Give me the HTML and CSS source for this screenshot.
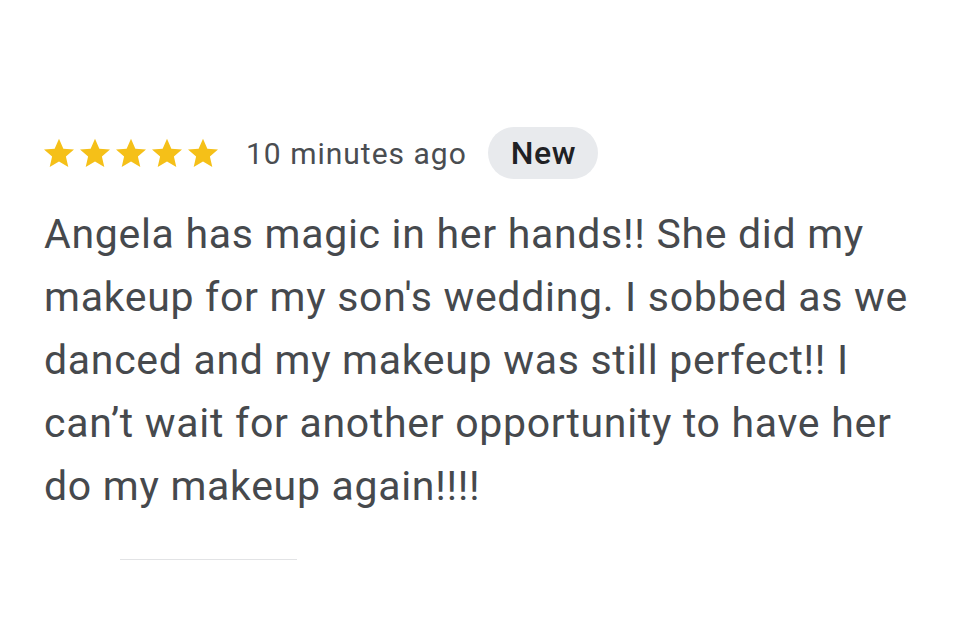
FILE: index.html
```html
<!DOCTYPE html>
<html lang="en">
<head>
<meta charset="utf-8">
<title>Review</title>
<link rel="stylesheet" href="styles.css">
</head>
<body>
<main class="review">
  <div class="review-head">
    <div class="stars" aria-label="5 stars">
      <svg class="star" viewBox="0 0 24 24"><path d="M12 2.5l2.9 6.6 7.1.6-5.4 4.7 1.6 7-6.2-3.7-6.2 3.7 1.6-7L2 9.7l7.1-.6z"/></svg>
      <svg class="star" viewBox="0 0 24 24"><path d="M12 2.5l2.9 6.6 7.1.6-5.4 4.7 1.6 7-6.2-3.7-6.2 3.7 1.6-7L2 9.7l7.1-.6z"/></svg>
      <svg class="star" viewBox="0 0 24 24"><path d="M12 2.5l2.9 6.6 7.1.6-5.4 4.7 1.6 7-6.2-3.7-6.2 3.7 1.6-7L2 9.7l7.1-.6z"/></svg>
      <svg class="star" viewBox="0 0 24 24"><path d="M12 2.5l2.9 6.6 7.1.6-5.4 4.7 1.6 7-6.2-3.7-6.2 3.7 1.6-7L2 9.7l7.1-.6z"/></svg>
      <svg class="star" viewBox="0 0 24 24"><path d="M12 2.5l2.9 6.6 7.1.6-5.4 4.7 1.6 7-6.2-3.7-6.2 3.7 1.6-7L2 9.7l7.1-.6z"/></svg>
    </div>
    <span class="time">10 minutes ago</span>
    <span class="badge">New</span>
  </div>
  <p class="review-text">Angela has magic in her hands!! She did my makeup for my son's wedding. I sobbed as we danced and my makeup was still perfect!! I can’t wait for another opportunity to have her do my makeup again!!!!</p>
  <div class="divider"></div>
</main>
</body>
</html>
```
FILE: styles.css
```css
html, body {
  margin: 0;
  padding: 0;
  background: #ffffff;
}
body {
  font-family: Roboto, "Noto Sans", sans-serif;
  width: 960px;
  height: 640px;
  overflow: hidden;
}
.review {
  padding: 127px 0 0 41px;
  display: flex;
  flex-direction: column;
}
.review-head {
  display: flex;
  align-items: center;
  height: 52px;
}
.stars {
  display: flex;
}
.star {
  width: 36px;
  height: 36px;
  fill: #f5c018;
  display: block;
}
.time {
  margin-left: 25px;
  font-size: 30px;
  letter-spacing: 1px;
  color: #4a4d51;
}
.badge {
  margin-left: 21px;
  height: 52px;
  padding: 0 22px 0 23px;
  border-radius: 26px;
  background: #e8eaed;
  color: #202124;
  font-size: 32px;
  font-weight: 500;
  letter-spacing: 0.5px;
  display: flex;
  align-items: center;
}
.review-text {
  margin: 24px 0 0 3px;
  width: 880px;
  font-size: 41px;
  letter-spacing: 0.7px;
  line-height: 63px;
  color: #46494d;
}
.divider {
  margin: 41px 0 0 79px;
  width: 177px;
  height: 1px;
  background: #e2e3e5;
}
```
